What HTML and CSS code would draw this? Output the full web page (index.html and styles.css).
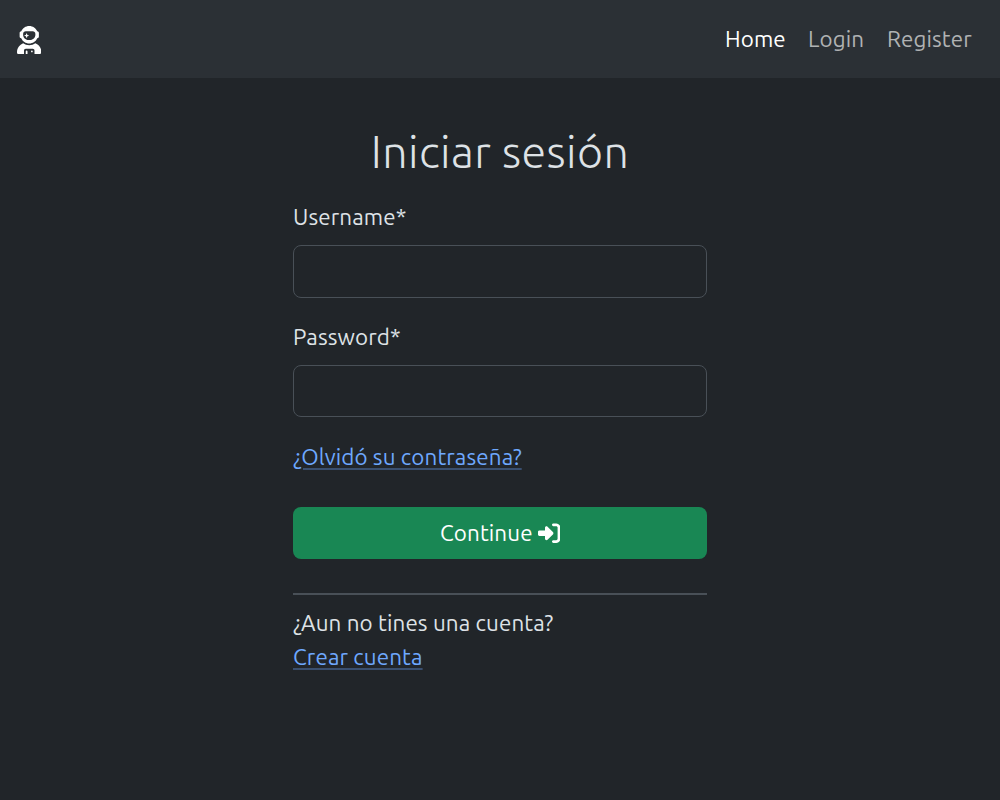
FILE: index.html
```html
<!DOCTYPE html>
<html lang="es">
<head>
<meta charset="utf-8">
<title>Iniciar sesión</title>
<link rel="stylesheet" href="styles.css">
</head>
<body>
<nav class="navbar">
  <a class="brand" href="#" aria-label="Home">
    <svg class="brand-icon" viewBox="0 0 448 512" fill="currentColor"><path d="M370.7 96.1C346.1 39.5 289.7 0 224 0S101.9 39.5 77.3 96.1C60.9 97.5 48 111.2 48 128v64c0 16.8 12.9 30.5 29.3 31.9C101.9 280.5 158.3 320 224 320s122.1-39.5 146.7-96.1c16.4-1.4 29.3-15.1 29.3-31.9V128c0-16.8-12.9-30.5-29.3-31.9zM336 144v16c0 53-43 96-96 96H208c-53 0-96-43-96-96V144c0-26.5 21.5-48 48-48H288c26.5 0 48 21.5 48 48zM189.3 162.7l-6-21.2c-.9-3.3-3.9-5.5-7.3-5.5s-6.4 2.2-7.3 5.5l-6 21.2-21.2 6c-3.3 .9-5.5 3.9-5.5 7.3s2.2 6.4 5.5 7.3l21.2 6 6 21.2c.9 3.3 3.9 5.5 7.3 5.5s6.4-2.2 7.3-5.5l6-21.2 21.2-6c3.3-.9 5.5-3.9 5.5-7.3s-2.2-6.4-5.5-7.3l-21.2-6zM112.7 316.5C46.7 342.6 0 407 0 482.3C0 498.7 13.3 512 29.7 512H128V448c0-17.7 14.3-32 32-32H288c17.7 0 32 14.3 32 32v64h98.3c16.4 0 29.7-13.3 29.7-29.7c0-75.3-46.7-139.7-112.7-165.8C303.9 338.8 265.5 352 224 352s-79.9-13.2-111.3-35.5zM176 448c-8.8 0-16 7.2-16 16v48h32V464c0-8.8-7.2-16-16-16zm96 32a16 16 0 1 0 0-32 16 16 0 1 0 0 32z"/></svg>
  </a>
  <div class="nav-links">
    <a class="nav-link nav-home active" href="#">Home</a>
    <a class="nav-link nav-login" href="#">Login</a>
    <a class="nav-link nav-register" href="#">Register</a>
  </div>
</nav>
<main class="panel">
  <h1 class="title">Iniciar sesión</h1>
  <form class="form">
    <label class="label" for="username">Username*</label>
    <input class="input" id="username" type="text">
    <label class="label" for="password">Password*</label>
    <input class="input input-pass" id="password" type="password">
    <a class="link link-forgot" href="#">¿Olvidó su contraseña?</a>
    <button class="button" type="button"><span class="button-text">Continue</span><svg class="button-icon" viewBox="0 0 512 512" fill="currentColor"><path d="M217.9 105.9L340.7 228.7c7.2 7.2 11.3 17.1 11.3 27.3s-4.1 20.1-11.3 27.3L217.9 406.1c-6.4 6.4-15 9.9-24 9.9c-18.7 0-33.9-15.2-33.9-33.9l0-62.1L32 320c-17.7 0-32-14.3-32-32l0-64c0-17.7 14.3-32 32-32l128 0 0-62.1c0-18.7 15.2-33.9 33.9-33.9c9 0 17.6 3.6 24 9.9zM352 416l64 0c17.7 0 32-14.3 32-32l0-256c0-17.7-14.3-32-32-32l-64 0c-17.7 0-32-14.3-32-32s14.3-32 32-32l64 0c53 0 96 43 96 96l0 256c0 53-43 96-96 96l-64 0c-17.7 0-32-14.3-32-32s14.3-32 32-32z"/></svg></button>
  </form>
  <hr class="divider">
  <p class="question">¿Aun no tines una cuenta?</p>
  <a class="link link-create" href="#">Crear cuenta</a>
</main>
</body>
</html>
```
FILE: styles.css
```css
* { box-sizing: border-box; }
body {
  margin: 0;
  min-height: 800px;
  background: #212529;
  color: #dee2e6;
  font-family: Ubuntu, "Noto Sans", sans-serif;
  font-size: 22.4px;
  line-height: 34px;
  letter-spacing: .11px;
}
.navbar {
  display: flex;
  align-items: center;
  justify-content: space-between;
  height: 78px;
  padding: 0 28px 0 16.5px;
  background: #2b3035;
}
.brand { display: flex; color: #fff; padding-top: 1px; }
.brand-icon { width: 24.5px; height: 28px; }
.nav-links { display: flex; gap: 22px; }
.nav-link { color: #b0b2b3; text-decoration: none; white-space: nowrap; }
.nav-link.active { color: #fff; }
.nav-home { width: 61px; }
.nav-login { width: 57px; }
.nav-register { width: 85px; }
.panel { width: 414px; margin: 0 auto; padding-top: 46px; }
.title {
  margin: 0 0 22px;
  text-align: center;
  font-size: 44.8px;
  font-weight: 300;
  line-height: 54px;
  letter-spacing: .45px;
  white-space: nowrap;
}
.form { display: flex; flex-direction: column; align-items: flex-start; }
.label { margin-bottom: 11px; }
.input {
  width: 100%;
  height: 53px;
  margin: 0 0 22px;
  padding: 8px 16px;
  border: 1px solid #495057;
  border-radius: 8px;
  background: #212529;
  color: #dee2e6;
  font: inherit;
}
.input-pass { height: 52px; margin-bottom: 23px; }
.link {
  color: #6ea8fe;
  text-decoration: underline;
  text-decoration-color: rgba(110, 168, 254, .33);
  text-decoration-thickness: 2px;
  text-underline-offset: 3px;
  white-space: nowrap;
}
.button {
  display: flex;
  align-items: center;
  justify-content: center;
  gap: 5px;
  width: 100%;
  height: 52px;
  margin-top: 33px;
  padding: 0;
  border: 0;
  border-radius: 8px;
  background: #198754;
  color: #fff;
  font: inherit;
  letter-spacing: inherit;
}
.button-icon { width: 22.4px; height: 22.4px; }
.divider { height: 2px; margin: 34px 0 11px; border: 0; background: #495057; }
.question { margin: 0; white-space: nowrap; }
```
